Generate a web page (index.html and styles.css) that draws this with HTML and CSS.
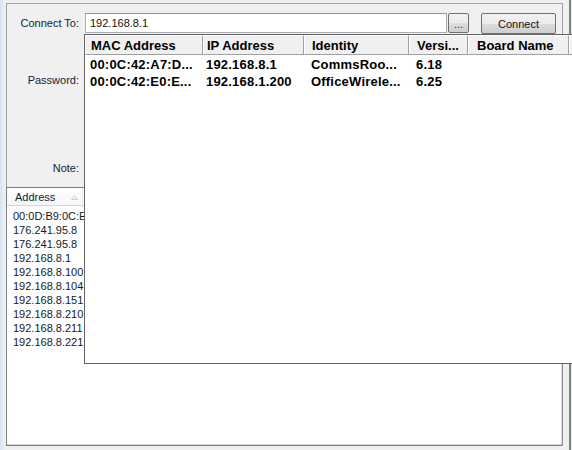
FILE: index.html
```html
<!DOCTYPE html>
<html>
<head>
<meta charset="utf-8">
<link rel="stylesheet" href="styles.css">
</head>
<body>
<div class="window">
  <div class="glass-left"></div>
  <div class="client">
    <div class="form">
      <div class="row row-connect">
        <label class="lbl">Connect To:</label>
        <div class="input">192.168.8.1</div>
        <button class="btn btn-dots">...</button>
        <button class="btn btn-connect">Connect</button>
      </div>
      <div class="row row-pass">
        <label class="lbl">Password:</label>
      </div>
      <div class="row row-note">
        <label class="lbl">Note:</label>
      </div>
    </div>
    <div class="list">
      <div class="list-head">
        <div class="list-col">Address
          <svg class="sort" width="7" height="5" viewBox="0 0 7 5"><path d="M0.5 4.5 L3.5 0.8 L6.5 4.5 Z" fill="none" stroke="#c8cdd3" stroke-width="1"/></svg>
        </div>
      </div>
      <div class="list-body">
        <div class="item">00:0D:B9:0C:E</div>
        <div class="item">176.241.95.8</div>
        <div class="item">176.241.95.8</div>
        <div class="item">192.168.8.1</div>
        <div class="item">192.168.8.100</div>
        <div class="item">192.168.8.104</div>
        <div class="item">192.168.8.151</div>
        <div class="item">192.168.8.210</div>
        <div class="item">192.168.8.211</div>
        <div class="item">192.168.8.221</div>
      </div>
    </div>
  </div>
  <div class="gap"></div>
  <div class="glass-right"></div>

  <div class="popup">
    <div class="grid head">
      <div class="hc c1">MAC Address</div>
      <div class="hc c2">IP Address</div>
      <div class="hc c3">Identity</div>
      <div class="hc c4">Versi...</div>
      <div class="hc c5">Board Name</div>
      <div class="hc c6"></div>
    </div>
    <div class="grid prow">
      <div class="pc c1">00:0C:42:A7:D...</div>
      <div class="pc c2">192.168.8.1</div>
      <div class="pc c3">CommsRoo...</div>
      <div class="pc c4">6.18</div>
      <div class="pc c5"></div>
      <div class="pc c6"></div>
    </div>
    <div class="grid prow">
      <div class="pc c1">00:0C:42:E0:E...</div>
      <div class="pc c2">192.168.1.200</div>
      <div class="pc c3">OfficeWirele...</div>
      <div class="pc c4">6.25</div>
      <div class="pc c5"></div>
      <div class="pc c6"></div>
    </div>
  </div>
</div>
</body>
</html>
```

FILE: styles.css
```css
html, body {
  margin: 0;
  padding: 0;
}
body {
  width: 572px;
  height: 450px;
  overflow: hidden;
  background: #f0f0f0;
  font-family: "Liberation Sans", Arial, sans-serif;
  font-size: 11px;
  color: #1a1a1a;
}
.window {
  position: relative;
  display: flex;
  height: 450px;
}
.glass-left {
  width: 6px;
  flex: none;
  background: linear-gradient(to right, #d6e3f2, #e8eef6 60%, #f0f0f0);
}
.client {
  width: 557px;
  flex: none;
  display: flex;
  flex-direction: column;
  margin-top: 3px;
}
.form {
  height: 184px;
  box-sizing: border-box;
  border: 1px solid #a0a0a0;
  border-bottom: none;
}
.row {
  display: flex;
  align-items: center;
}
.row-connect {
  margin-top: 9px;
  height: 21px;
  align-items: flex-start;
}
.row-pass {
  margin-top: 39px;
  height: 14px;
}
.row-note {
  margin-top: 74px;
  height: 14px;
}
.lbl {
  width: 72px;
  flex: none;
  text-align: right;
  line-height: 14px;
  color: #16223a;
}
.row-connect .lbl {
  line-height: 21px;
}
.input {
  margin-left: 6px;
  width: 362px;
  height: 20px;
  box-sizing: border-box;
  border: 1px solid #abadb3;
  border-top-color: #8f949c;
  background: #fff;
  padding-left: 4px;
  line-height: 19px;
  color: #111;
}
.btn {
  font-family: "Liberation Sans", Arial, sans-serif;
  font-size: 11px;
  box-sizing: border-box;
  border: 1px solid #707070;
  border-radius: 2px;
  background: linear-gradient(#f2f2f2 0%, #ebebeb 50%, #dddddd 51%, #cfcfcf 100%);
  padding: 0;
  margin: 0;
  color: #111;
}
.btn-dots {
  margin-left: 1px;
  width: 21px;
  height: 20px;
  color: #1b2a80;
  line-height: 16px;
  padding-top: 2px;
}
.btn-connect {
  margin-left: 12px;
  width: 75px;
  height: 21px;
}
.list {
  height: 259px;
  box-sizing: border-box;
  border: 1px solid #7d7d7d;
  border-right-color: #8c8c8c;
  box-shadow: inset -1px -1px 0 #dcdcdc;
  background: #fff;
}
.list-head {
  height: 18px;
  box-sizing: border-box;
  border-bottom: 1px solid #d5d5d5;
  background: linear-gradient(#ffffff, #f5f6f7);
  display: flex;
}
.list-col {
  width: 76px;
  box-sizing: border-box;
  padding-left: 8px;
  line-height: 19px;
  color: #16223a;
  border-right: 1px solid #e3e8ee;
  position: relative;
}
.sort {
  position: absolute;
  left: 64px;
  top: 7px;
}
.list-body {
  padding-top: 3px;
  padding-left: 6px;
}
.item {
  line-height: 14px;
  height: 14px;
  color: #111a2a;
  white-space: nowrap;
}
.gap {
  width: 6px;
  flex: none;
}
.glass-right {
  flex: 1;
  border-left: 2px solid #7d7f84;
  background: #dfe9f5;
}
.popup {
  position: absolute;
  left: 84px;
  top: 34px;
  width: 500px;
  height: 330px;
  box-sizing: border-box;
  border: 1px solid #646464;
  border-right: none;
  background: #fff;
  font-weight: bold;
  font-size: 13px;
  color: #000;
}
.grid {
  display: grid;
  grid-template-columns: 118px 101px 105px 59px 101px 1fr;
}
.head {
  height: 20px;
  background: #f0f0f0;
}
.hc {
  box-sizing: border-box;
  border-left: 1px solid #ffffff;
  border-top: 1px solid #ffffff;
  border-right: 1px solid #a0a0a0;
  border-bottom: 1px solid #a0a0a0;
  line-height: 19px;
  white-space: nowrap;
  overflow: hidden;
}
.prow {
  height: 17px;
  line-height: 17px;
}
.prow:nth-child(2) {
  margin-top: 1px;
}
.pc {
  white-space: nowrap;
  overflow: hidden;
  letter-spacing: 0.2px;
}
.c1 { padding-left: 5px; }
.c2 { padding-left: 3px; }
.c3 { padding-left: 7px; }
.c4 { padding-left: 7px; }
.c5 { padding-left: 8px; }
```
